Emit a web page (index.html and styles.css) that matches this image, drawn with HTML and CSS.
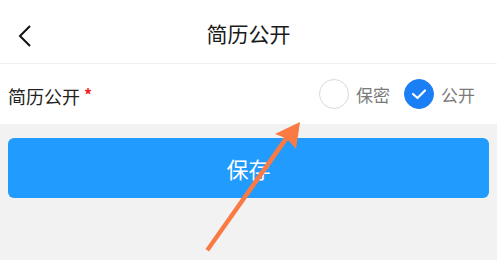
FILE: index.html
```html
<!DOCTYPE html>
<html>
<head>
    <title>简历公开</title>
    <meta charset="utf-8">
    <link rel="stylesheet" href="styles.css">
</head>
<body>
    <div class="page">
        <div class="header">
            <svg class="back" width="16" height="24" viewBox="0 0 16 24">
                <path d="M13 2 L3 12 L13 22" fill="none" stroke="#111" stroke-width="2"/>
            </svg>
            <div class="title">简历公开</div>
        </div>
        <div class="row">
            <div class="label">简历公开<span class="req">*</span></div>
            <div class="options">
                <div class="option">
                    <span class="radio"></span>
                    <span class="optText">保密</span>
                </div>
                <div class="option">
                    <span class="radio checked">
                        <svg width="16" height="12" viewBox="0 0 16 12">
                            <path d="M2 6 L6.5 10 L14 2.5" fill="none" stroke="#fff" stroke-width="2.2" stroke-linecap="round" stroke-linejoin="round"/>
                        </svg>
                    </span>
                    <span class="optText">公开</span>
                </div>
            </div>
        </div>
        <div class="actions">
            <button class="saveButton">保存</button>
        </div>
    </div>
    <svg class="arrow" width="497" height="260" viewBox="0 0 497 260">
        <path d="M205.5 249 L209 251.5 L288 140 L296 149 L300 122 L275 134 L284 137.5 Z" fill="#fa7a44"/>
    </svg>
</body>
</html>
```

FILE: styles.css
```css
body {
    margin: 0;
    background-color: #f2f2f2;
    font-family: 'Noto Sans CJK SC', 'Noto Sans', sans-serif;
    width: 497px;
    height: 260px;
    overflow: hidden;
    position: relative;
}

.header {
    height: 63px;
    background-color: #fff;
    border-bottom: 1px solid #f0f0f0;
    display: flex;
    align-items: center;
    justify-content: center;
    position: relative;
}

.back {
    position: absolute;
    left: 17px;
    top: 24px;
}

.title {
    font-size: 21px;
    color: #1a1a1a;
    margin-top: 2px;
}

.row {
    height: 60px;
    background-color: #fff;
    display: flex;
    align-items: center;
    justify-content: space-between;
    padding: 0 22px 0 8px;
}

.label {
    font-size: 18px;
    color: #222;
    display: flex;
    align-items: flex-start;
    margin-top: 4px;
}

.req {
    color: #f01c1c;
    font-size: 16px;
    font-weight: bold;
    margin-left: 4px;
    margin-top: 3px;
    line-height: 1;
}

.options {
    display: flex;
    gap: 14px;
}

.option {
    display: flex;
    align-items: center;
    gap: 7px;
}

.radio {
    width: 28px;
    height: 28px;
    border: 1px solid #dadada;
    border-radius: 50%;
    display: flex;
    align-items: center;
    justify-content: center;
}

.radio.checked {
    background-color: #1a7ff4;
    border-color: #1a7ff4;
}

.optText {
    font-size: 17px;
    color: #7a7a7a;
}

.actions {
    padding: 14px 8px;
}

.saveButton {
    display: block;
    width: 100%;
    height: 60px;
    border: none;
    border-radius: 6px;
    background-color: #219bfd;
    color: #fff;
    font-family: inherit;
    font-size: 22px;
}

.arrow {
    position: absolute;
    left: 0;
    top: 0;
}
```
